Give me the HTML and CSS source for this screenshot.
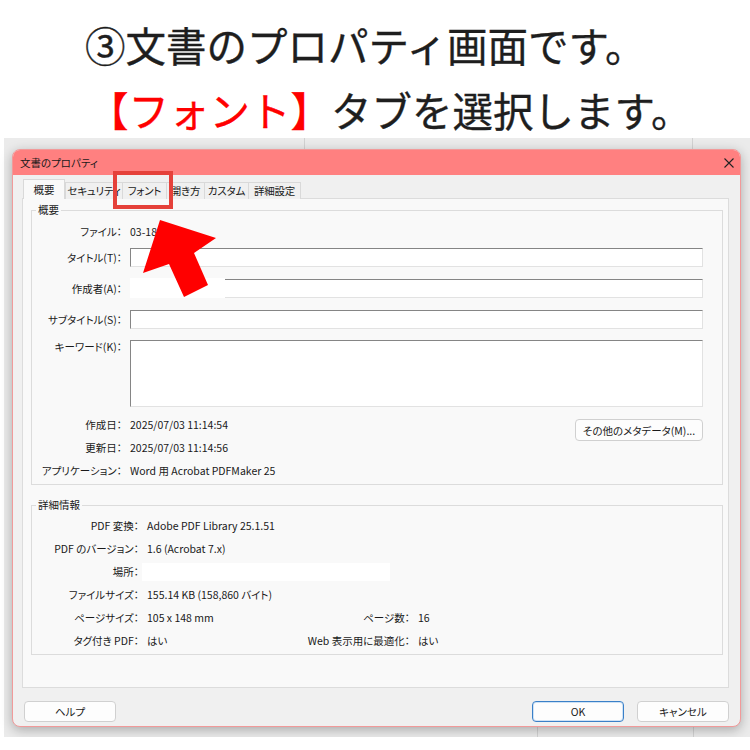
FILE: index.html
```html
<!DOCTYPE html>
<html lang="ja">
  <head>
    <meta charset="UTF-8" />
    <meta name="viewport" content="width=device-width, initial-scale=1.0" />
    <title>文書のプロパティ</title>
    <link rel="stylesheet" href="styles.css">
  </head>
  <body>
    <div class="caption">
      <p class="line1">③文書のプロパティ画面です。</p>
      <p class="line2"><span class="red">【フォント】</span>タブを選択します。</p>
    </div>

    <div class="screen">
      <div class="dialog">
        <div class="titlebar">
          <span>文書のプロパティ</span>
          <svg class="close" width="10" height="10" viewBox="0 0 10 10">
            <path d="M0.5 0.5 L9.5 9.5 M9.5 0.5 L0.5 9.5" stroke="#222" stroke-width="1.1" fill="none" />
          </svg>
        </div>

        <div class="dlg-body">
          <div class="tabs">
            <div class="tab active">概要</div>
            <div class="tab w57">セキュリティ</div>
            <div class="tab w44">フォント</div>
            <div class="tab w38">開き方</div>
            <div class="tab w44">カスタム</div>
            <div class="tab w52">詳細設定</div>
          </div>

          <div class="panel">
            <fieldset class="group summary">
              <legend>概要</legend>
              <div class="row text-row first">
                <div class="lbl">ファイル：</div>
                <div class="val">03-18.pdf</div>
              </div>
              <div class="row field-row title-row">
                <div class="lbl">タイトル(T)：</div>
                <div class="field"></div>
              </div>
              <div class="row field-row">
                <div class="lbl">作成者(A)：</div>
                <div class="field"><span class="mask"></span></div>
              </div>
              <div class="row field-row">
                <div class="lbl">サブタイトル(S)：</div>
                <div class="field"></div>
              </div>
              <div class="row field-row keywords">
                <div class="lbl">キーワード(K)：</div>
                <div class="field area"></div>
              </div>
              <div class="dates">
                <div class="date-rows">
                  <div class="row text-row">
                    <div class="lbl">作成日：</div>
                    <div class="val">2025/07/03 11:14:54</div>
                  </div>
                  <div class="row text-row">
                    <div class="lbl">更新日：</div>
                    <div class="val">2025/07/03 11:14:56</div>
                  </div>
                </div>
                <button class="btn meta">その他のメタデータ(M)...</button>
              </div>
              <div class="row text-row">
                <div class="lbl">アプリケーション：</div>
                <div class="val">Word 用 Acrobat PDFMaker 25</div>
              </div>
            </fieldset>

            <fieldset class="group details">
              <legend>詳細情報</legend>
              <div class="row text-row first">
                <div class="lbl">PDF 変換：</div>
                <div class="val">Adobe PDF Library 25.1.51</div>
              </div>
              <div class="row text-row">
                <div class="lbl">PDF のバージョン：</div>
                <div class="val">1.6 (Acrobat 7.x)</div>
              </div>
              <div class="row text-row">
                <div class="lbl">場所：</div>
                <div class="val"><span class="blank"></span></div>
              </div>
              <div class="row text-row">
                <div class="lbl">ファイルサイズ：</div>
                <div class="val">155.14 KB (158,860 バイト)</div>
              </div>
              <div class="row text-row">
                <div class="lbl">ページサイズ：</div>
                <div class="val half">105 x 148 mm</div>
                <div class="lbl2">ページ数：</div>
                <div class="val">16</div>
              </div>
              <div class="row text-row">
                <div class="lbl">タグ付き PDF：</div>
                <div class="val half">はい</div>
                <div class="lbl2">Web 表示用に最適化：</div>
                <div class="val">はい</div>
              </div>
            </fieldset>
          </div>

          <div class="buttons">
            <button class="btn">ヘルプ</button>
            <div class="spacer"></div>
            <button class="btn ok">OK</button>
            <button class="btn">キャンセル</button>
          </div>
        </div>
      </div>

      <!-- callout over the screenshot -->
      <div class="highlight"></div>
      <svg class="arrow" width="746" height="599" viewBox="4 138 746 599">
        <polygon points="160,220 216,238 194,253 208,285 184,297 169,264 143,273" fill="#ff0000" />
      </svg>
    </div>
  </body>
</html>
```

FILE: styles.css
```css
body {
  margin: 0;
  background-color: #fff;
  font-family: "Noto Sans CJK JP", "Noto Sans", sans-serif;
}

.caption {
  height: 138px;
  padding-top: 12px;
  box-sizing: border-box;
  color: #1e1e1e;
  font-size: 40.5px;
  font-weight: 400;
  -webkit-text-stroke: 0.35px currentColor;
}

.caption p {
  margin: 0;
  line-height: 65px;
  white-space: nowrap;
}

.line1 {
  padding-left: 85px;
}

.line2 {
  padding-left: 88px;
}

.red {
  color: #ff0000;
}

/* screenshot area */
.screen {
  position: relative;
  margin-left: 4px;
  width: 746px;
  height: 599px;
  padding: 11px 0 0 8px;
  box-sizing: border-box;
  background-color: #ebebeb;
  background-image:
    linear-gradient(#d2d2d2, #d2d2d2),
    linear-gradient(#d2d2d2, #d2d2d2),
    linear-gradient(#d2d2d2, #d2d2d2),
    linear-gradient(#d2d2d2, #d2d2d2);
  background-size: 1px 11px, 1px 11px, 1px 10px, 1px 10px;
  background-position: 300px 0, 688px 0, 533px 100%, 689px 100%;
  background-repeat: no-repeat;
}

.dialog {
  width: 729px;
  height: 578px;
  box-sizing: border-box;
  border: 1px solid #f19a9a;
  border-radius: 8px;
  overflow: hidden;
  background-color: #f0f0f0;
  box-shadow: 0 3px 12px rgba(0, 0, 0, 0.28);
  font-size: 10.5px;
  color: #1a1a1a;
  font-feature-settings: "palt";
}

.titlebar {
  height: 25px;
  display: flex;
  align-items: center;
  justify-content: space-between;
  padding: 0 6px 0 7px;
  background-color: #ff8080;
}

.close {
  display: block;
}

.dlg-body {
  padding: 4px 11px 0 9px;
}

.tabs {
  display: flex;
  align-items: flex-end;
  margin-left: 1px;
  margin-bottom: -1px;
  position: relative;
}

.tab {
  height: 17px;
  line-height: 16px;
  border: 1px solid #d9d9d9;
  border-bottom: none;
  margin-left: -1px;
  box-sizing: border-box;
  background-color: #f0f0f0;
  text-align: center;
  white-space: nowrap;
  overflow: hidden;
  letter-spacing: -0.2px;
}

.w57 { width: 58px; }
.w44 { width: 45px; }
.w38 { width: 39px; }
.w52 { width: 53px; }

.tab.active {
  width: 42px;
  height: 20px;
  line-height: 19px;
  margin-left: 0;
  margin-right: 1px;
  background-color: #f9f9f9;
  position: relative;
  z-index: 1;
  letter-spacing: 0;
}

.panel {
  height: 490px;
  box-sizing: border-box;
  border: 1px solid #dcdcdc;
  background-color: #f9f9f9;
  padding: 4px 5px 0 8px;
}

.group {
  margin: 0;
  padding: 0 19px 2px 0;
  border: 1px solid #dcdcdc;
}

.group legend {
  margin-left: 4px;
  padding: 0 2px;
  line-height: 14px;
}

.details {
  margin-top: 13px;
}

.row {
  display: flex;
  align-items: center;
}

.text-row {
  height: 23px;
}

.summary .first {
  margin-top: 3px;
}

.details .first {
  margin-top: 2px;
}

.lbl {
  width: 90px;
  margin-right: 8px;
  text-align: right;
  white-space: nowrap;
  flex-shrink: 0;
}

.details .lbl {
  width: 107px;
}

.val {
  white-space: nowrap;
}

.val.half {
  width: 143px;
}

.lbl2 {
  width: 120px;
  margin-right: 8px;
  text-align: right;
  white-space: nowrap;
}

.field-row {
  margin-top: 12px;
}

.title-row {
  margin-top: 5px;
}

.field {
  position: relative;
  flex: 1;
  height: 19px;
  box-sizing: border-box;
  background-color: #fff;
  border: 1px solid #e2e2e2;
  border-top-color: #858585;
  border-left-color: #858585;
}

.field.area {
  height: 67px;
}

.keywords {
  align-items: flex-start;
  margin-top: 11px;
}

.keywords .lbl {
  margin-top: -1px;
}

/* redacted part of the author field */
.mask {
  position: absolute;
  left: -1px;
  top: -2px;
  width: 95px;
  height: 20px;
  background-color: #fff;
}

.blank {
  display: block;
  margin-left: -5px;
  width: 248px;
  height: 18px;
  background-color: #fff;
}

.dates {
  display: flex;
  margin-top: 6px;
}

.date-rows {
  flex: 1;
}

.btn {
  height: 21px;
  box-sizing: border-box;
  border: 1px solid #d0d0d0;
  border-radius: 4px;
  background-color: #fdfdfd;
  font-family: inherit;
  font-size: 10.5px;
  font-feature-settings: "palt";
  color: #1a1a1a;
  padding: 0;
}

.meta {
  align-self: flex-start;
  margin-top: 6px;
  width: 128px;
  height: 22px;
}

.buttons {
  display: flex;
  margin-top: 13px;
  margin-left: 2px;
  gap: 13px;
}

.buttons .btn {
  width: 92px;
}

.buttons .spacer {
  flex: 1;
}

.buttons .ok {
  border-color: #3a80c8;
  box-shadow: inset 0 0 0 1px #cfe2f5;
}

/* red callout drawn on top of the screenshot */
.highlight {
  position: absolute;
  left: 109px;
  top: 33px;
  width: 60px;
  height: 38px;
  box-sizing: border-box;
  border: 4px solid #e5413a;
}

.arrow {
  position: absolute;
  left: 0;
  top: 0;
  pointer-events: none;
}
```
